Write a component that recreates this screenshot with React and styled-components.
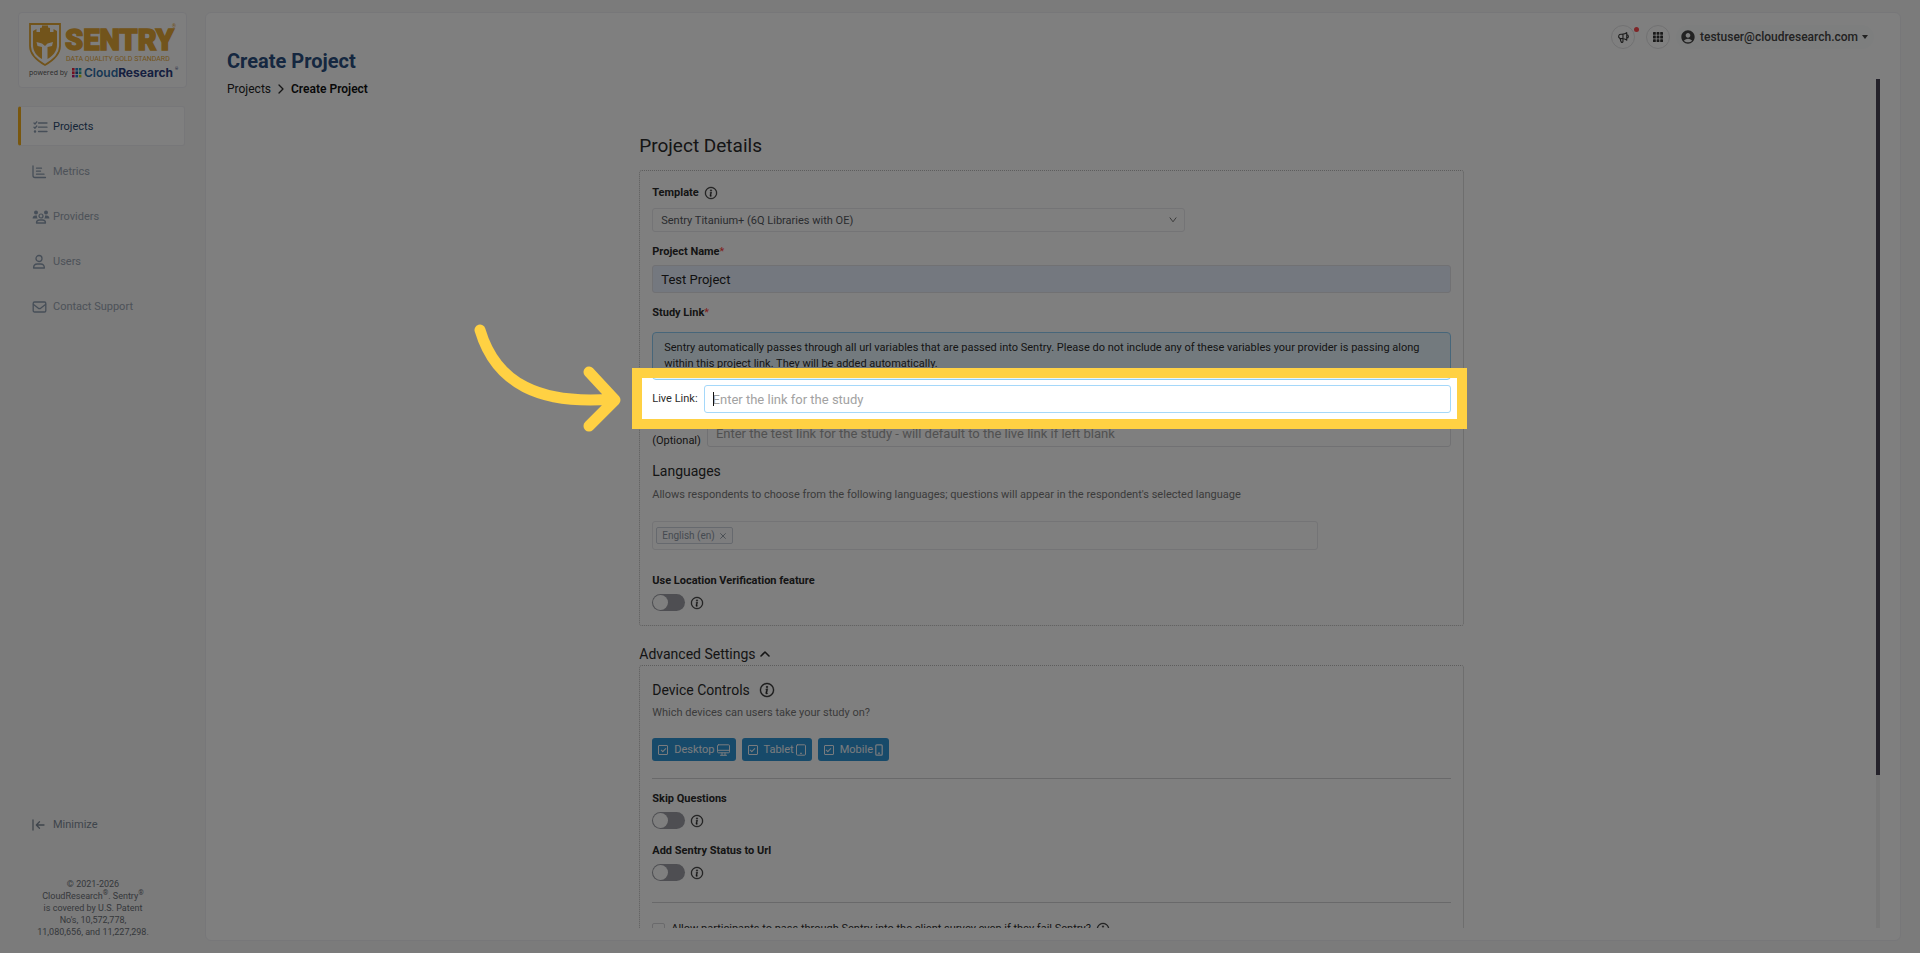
import React, { useLayoutEffect, useRef, useState } from "react";
import styled, { createGlobalStyle, css } from "styled-components";
import { BsInfoCircle } from "react-icons/bs";
import { MdAccountCircle } from "react-icons/md";
import { HiOutlineSpeakerphone } from "react-icons/hi";

const GlobalStyle = createGlobalStyle`
  *, *::before, *::after { box-sizing: border-box; }
  body {
    margin: 0;
    background: #f6f6f6;
    color: #2b2b2b;
    font-family: Roboto, Inter, sans-serif;
    font-size: 11px;
    line-height: 16px;
    overflow: hidden;
  }
  button, input, select { font-family: inherit; color: inherit; }
  button { cursor: pointer; }
  h1, h2, h3, p, ul { margin: 0; padding: 0; }
`;

const Page = styled.div`
  display: flex;
  gap: 18px;
  height: 100vh;
  padding: 12px 19px 12px 18px;
`;

/* ---------- Sidebar ---------- */

const Sidebar = styled.aside`
  flex: 0 0 169px;
  display: flex;
  flex-direction: column;
`;

const LogoBox = styled.a`
  display: block;
  height: 76px;
  border: 1px solid #ececf2;
  border-radius: 4px;
  background: #fdfdfd;
`;

const Nav = styled.nav`
  display: flex;
  flex-direction: column;
  gap: 5px;
  margin-top: 18px;
  padding-right: 2px;
`;

const NavLink = styled.a`
  display: flex;
  align-items: center;
  gap: 3px;
  height: 40px;
  padding: 1px 0 0 11px;
  border: 1px solid transparent;
  border-left: 3px solid transparent;
  border-radius: 3px;
  color: #9aa5b2;
  font-size: 11px;
  text-decoration: none;
  ${(p) =>
    p.$active &&
    css`
      background: #fff;
      border-color: #eeeef2;
      border-left-color: #f2ae1c;
      color: #2c4a70;
    `}
  svg { width: 18px; height: 16px; color: #8d9db0; }
`;

const Minimize = styled.button`
  display: flex;
  align-items: center;
  gap: 7px;
  margin: auto 0 0 14px;
  padding: 0;
  border: 0;
  background: none;
  color: #7e8a98;
  font-size: 11px;
  line-height: 16px;
`;

const Legal = styled.p`
  width: 150px;
  margin: 45px 0 3px;
  color: #6c7178;
  font-size: 9px;
  line-height: 12px;
  text-align: center;
  sup { font-size: 7px; line-height: 0; }
`;

/* ---------- Main card ---------- */

const Card = styled.main`
  flex: 1;
  min-width: 0;
  display: flex;
  flex-direction: column;
  padding-bottom: 12px;
  border: 1px solid #eeeef3;
  border-radius: 6px;
  background: #fff;
`;

const Header = styled.header`
  display: flex;
  justify-content: space-between;
  height: 66px;
  padding: 12px 26px 0 21px;
`;

const Title = styled.h1`
  margin-top: 24px;
  color: #2b4f80;
  font-size: 20px;
  line-height: 24px;
  font-weight: 700;
`;

const Tools = styled.div`
  display: flex;
  align-items: flex-start;
  gap: 11px;
`;

const RoundButton = styled.button`
  position: relative;
  display: grid;
  place-items: center;
  width: 24px;
  height: 24px;
  padding: 0;
  border: 1px solid #e2e2e4;
  border-radius: 50%;
  background: none;
  color: #333;
`;

const Dot = styled.span`
  position: absolute;
  top: 1px;
  right: -5px;
  width: 5px;
  height: 5px;
  border-radius: 50%;
  background: #ff4a4f;
`;

const UserMenu = styled.button`
  display: flex;
  align-items: center;
  gap: 4px;
  height: 24px;
  margin-left: -5px;
  padding: 0 6px 0 4px;
  border: 0;
  border-radius: 12px;
  background: #fbfcfc;
  color: #444;
  font-size: 12px;
  font-weight: 500;
`;

const Body = styled.div`
  flex: 1;
  min-height: 0;
  display: flex;
  padding-right: 20px;
`;

const Scroller = styled.div`
  flex: 1;
  min-width: 0;
  overflow: hidden;
  padding: 2px 0 0 21px;
`;

const Track = styled.div`
  width: 4px;
  background: #f0f0f0;
`;

const Thumb = styled.div`
  height: 82%;
  background: #484454;
`;

const Crumbs = styled.nav`
  display: flex;
  align-items: center;
  gap: 7px;
  height: 16px;
  font-size: 12px;
  a { color: #222; text-decoration: none; }
  strong { color: #111; font-weight: 600; }
`;

/* ---------- Form ---------- */

const Form = styled.form`
  width: 50%;
  min-width: 640px;
  margin: 37px auto 0;
`;

const Heading = styled.h2`
  font-size: 19px;
  line-height: 24px;
  font-weight: 400;
`;

const Panel = styled.section`
  margin-top: ${(p) => p.$gap}px;
  padding: 14px 12px;
  border: 1px dotted #bababa;
  border-radius: 3px;
`;

const Line = styled.div`
  display: flex;
  align-items: center;
  gap: ${(p) => p.$gap || 6}px;
  margin-top: ${(p) => p.$top || 0}px;
`;

const InfoIcon = styled(BsInfoCircle)`
  stroke: currentColor;
  stroke-width: 0.5px;
  overflow: visible;
`;

const Label = styled.label`
  display: block;
  font-size: 11px;
  line-height: 16px;
  font-weight: 700;
  margin-top: ${(p) => p.$top || 0}px;
`;

const Required = styled.span`
  color: #ff4040;
  font-weight: 400;
`;

const SelectWrap = styled.div`
  display: grid;
  align-items: center;
  width: calc(100% * 2 / 3);
  margin-top: 7px;
  select, svg { grid-area: 1 / 1; }
  svg { justify-self: end; margin-right: 8px; color: #777; pointer-events: none; }
`;

const Select = styled.select`
  appearance: none;
  width: 100%;
  height: 24px;
  padding: 0 8px;
  border: 1px solid #e8e8ec;
  border-radius: 3px;
  background: #fff;
  color: #55585e;
  font-size: 11px;
`;

const TextInput = styled.input`
  flex: 1;
  width: 100%;
  min-width: 0;
  height: 28px;
  padding: 0 8px;
  border: 1px solid ${(p) => (p.$focused ? "#a5d8fa" : "#e2e2e6")};
  border-radius: 3px;
  background: ${(p) => (p.$filled ? "#e8f0fe" : "#fff")};
  color: #222;
  font-size: 13px;
  outline: none;
  margin-top: ${(p) => p.$top || 0}px;
  &::placeholder { color: #a2a2a2; opacity: 1; }
`;

const Notice = styled.div`
  margin-top: 11px;
  padding: 7px 11px;
  border: 1px solid #8fcdf5;
  border-radius: 4px;
  background: #e6f5fd;
`;

const LinkRow = styled.div`
  display: flex;
  align-items: center;
  gap: 6px;
  margin-top: ${(p) => p.$top}px;
`;

const FieldWrap = styled.div`
  position: relative;
  flex: 1;
  display: flex;
`;

const TextCaret = styled.span`
  position: absolute;
  top: 7px;
  left: 9px;
  width: 1px;
  height: 14px;
  background: #111;
`;

const Subheading = styled.h3`
  font-size: 14px;
  line-height: 20px;
  font-weight: 400;
`;

const Hint = styled.p`
  margin-top: ${(p) => p.$top}px;
  color: #777;
`;

const TagBox = styled.div`
  display: flex;
  align-items: center;
  width: calc(100% * 5 / 6);
  height: 29px;
  margin-top: 18px;
  padding: 0 3px;
  border: 1px solid #e8e8ec;
  border-radius: 3px;
  input { flex: 1; min-width: 0; border: 0; background: none; outline: none; }
`;

const Tag = styled.span`
  display: flex;
  align-items: center;
  gap: 5px;
  height: 17px;
  padding: 0 6px 0 5px;
  border: 1px solid #cdd3dc;
  border-radius: 2px;
  background: #fbfbfd;
  color: #8b95a2;
  font-size: 10px;
  button { display: grid; padding: 0; border: 0; background: none; }
`;

const Switch = styled.input`
  appearance: none;
  display: flex;
  width: 33px;
  height: 17px;
  margin: 0;
  padding: 1px;
  border-radius: 9px;
  background: #9c9da4;
  &::before {
    content: "";
    width: 15px;
    height: 15px;
    border-radius: 50%;
    background: #fff;
  }
`;

const DisclosureButton = styled.button`
  display: flex;
  align-items: center;
  gap: 4px;
  margin-top: 18px;
  padding: 0;
  border: 0;
  background: none;
  font-size: 14px;
  line-height: 20px;
`;

const Device = styled.label`
  display: flex;
  align-items: center;
  height: 23px;
  padding: 0 6px;
  border-radius: 3px;
  background: #2f94d4;
  color: #f2f7fc;
  font-size: 11px;
  span { margin: 0 2px 0 6px; }
`;

const Tick = styled.input`
  appearance: none;
  display: grid;
  place-items: center;
  width: 10px;
  height: 10px;
  margin: 0;
  border: 1px solid #f2f7fc;
  border-radius: 1px;
  &::before {
    content: "";
    width: 3px;
    height: 5px;
    border: solid #f2f7fc;
    border-width: 0 1px 1px 0;
    transform: rotate(45deg);
  }
`;

const Divider = styled.hr`
  margin: ${(p) => p.$top}px 0 0;
  border: 0;
  border-top: 1px solid #d2d2d4;
`;

const Box = styled.input`
  appearance: none;
  width: 13px;
  height: 13px;
  margin: 0;
  border: 1px solid #d4d4d8;
  border-radius: 2px;
`;

/* ---------- Walkthrough overlay ---------- */

const Spotlight = styled.div`
  position: fixed;
  border: 10px solid #ffd143;
  pointer-events: none;
  box-shadow: 0 0 0 4000px rgba(0, 0, 0, 0.5);
`;

const Arrow = styled.svg`
  position: absolute;
  right: 100%;
  top: 50%;
  width: 158px;
  height: 110px;
  margin: -76px 20px 0 0;
`;

/* ---------- Drawings ---------- */

const stroke = {
  fill: "none",
  stroke: "currentColor",
  strokeLinecap: "round",
  strokeLinejoin: "round",
};

const ListIcon = () => (
  <svg viewBox="0 0 18 16" {...stroke} strokeWidth="1.3">
    <path d="M6.5 4H15M6.5 8.2H15M6.5 12.5H15M2 4l1 1 1.8-2.2M2 8.2l1 1 1.8-2.2" />
    <circle cx="3" cy="12.5" r=".6" fill="currentColor" />
  </svg>
);

const ChartIcon = () => (
  <svg viewBox="0 0 18 16" {...stroke} strokeWidth="1.3">
    <path d="M1 2v9.5q0 2 2 2h10.500M4.500 4.200h5M4.500 7.200h4M4.500 10.200h7.500" />
  </svg>
);

const PeopleIcon = () => (
  <svg viewBox="0 0 18 16" fill="currentColor">
    <circle cx="4" cy="3.600" r="2" />
    <circle cx="14" cy="3.600" r="2" />
    <path d="M.6 9.500c0-2 1.200-3 2.800-3h1.600c-.2 1.400.1 2.200.8 3zM17.400 9.500c0-2-1.200-3-2.800-3h-1.600c.2 1.400-.1 2.200-.8 3z" />
    <circle cx="9" cy="7" r="2" fill="none" stroke="currentColor" strokeWidth="1.200" />
    <path d="M4.500 14c0-2 1.500-3 3-3h3c1.500 0 3 1 3 3z" fill="none" stroke="currentColor" strokeWidth="1.300" strokeLinejoin="round" />
  </svg>
);

const PersonIcon = () => (
  <svg viewBox="0 0 18 16" {...stroke} strokeWidth="1.300">
    <circle cx="7" cy="4.500" r="3" />
    <path d="M1.600 14c0-2.600 1.500-4 3.700-4h3.400c2.200 0 3.700 1.400 3.700 4z" />
  </svg>
);

const MailIcon = () => (
  <svg viewBox="0 0 18 16" {...stroke} strokeWidth="1.300">
    <rect x="1.200" y="3" width="12.600" height="10" rx="1.300" />
    <path d="M1.500 5.500l4.600 3.600q1.400 1 2.800 0l4.600-3.600" />
  </svg>
);

const MinimizeIcon = () => (
  <svg width="14" height="12" viewBox="0 0 14 12" {...stroke} strokeWidth="1.300">
    <path d="M1 1v10M12 6H4.500M7.500 2.800L4.300 6l3.200 3.200" />
  </svg>
);

const GridIcon = () => (
  <svg width="10" height="10" viewBox="0 0 10 10" fill="currentColor">
    {[0, 3.6, 7.2].map((y) =>
      [0, 3.6, 7.2].map((x) => (
        <rect key={`${x}-${y}`} x={x} y={y} width="2.800" height="2.800" rx=".5" />
      ))
    )}
  </svg>
);

const CaretIcon = () => (
  <svg width="6" height="4" viewBox="0 0 6 4" fill="currentColor">
    <path d="M0 0h6L3 4z" />
  </svg>
);

const ChevronRight = () => (
  <svg width="6" height="10" viewBox="0 0 6 10" {...stroke} strokeWidth="1.300">
    <path d="M1 1l4 4-4 4" />
  </svg>
);

const ChevronDown = () => (
  <svg width="8" height="6" viewBox="0 0 8 6" {...stroke} strokeWidth="1">
    <path d="M1 .8l3 4 3-4" />
  </svg>
);

const ChevronUp = () => (
  <svg width="10" height="8" viewBox="0 0 10 8" {...stroke} strokeWidth="1.600">
    <path d="M1 6l4-4 4 4" />
  </svg>
);

const CloseIcon = () => (
  <svg width="6" height="6" viewBox="0 0 6 6" {...stroke} strokeWidth=".9">
    <path d="M.6.6l4.800 4.800M5.400.6L.6 5.400" />
  </svg>
);

const DesktopIcon = () => (
  <svg width="13" height="12" viewBox="0 0 13 12" {...stroke} strokeWidth="1">
    <rect x=".5" y=".8" width="12" height="8" rx="1" />
    <path d="M.5 6.300h12M5 9v2M8 9v2M3.500 11.300h6" />
  </svg>
);

const TabletIcon = () => (
  <svg width="10" height="12" viewBox="0 0 10 12" {...stroke} strokeWidth="1">
    <rect x=".5" y=".8" width="9" height="10.400" rx="1" />
    <path d="M4.400 9.300h1.200" />
  </svg>
);

const MobileIcon = () => (
  <svg width="8" height="12" viewBox="0 0 8 12" {...stroke} strokeWidth="1.200">
    <rect x=".8" y=".8" width="6.400" height="10.400" rx="1" />
    <path d="M3.500 9.200h1" />
  </svg>
);

const LogoDots = ["#e8203c", "#2b7fd0", "#1d9fb0", "#e8203c", "#2350a0", "#28a8a0", "#c01870", "#2b7fd0", "#c8d820"];

const Logo = () => (
  <svg width="167" height="74" viewBox="0 0 167 74" role="img" aria-label="Sentry">
    <path d="M11 11h30v22c0 9-8 15-15 19-7-4-15-10-15-19z" fill="none" stroke="#e5a836" strokeWidth="1.800" />
    <path
      d="M14 18l3.500-2v3h3.500v-4l2-.5v-2h6v2l2 .5v4h3.500v-3l3.500 2v14c0 7-5 11.500-9.500 14V34l4.500-1 1-4-5.500 1.500L26 33l-3-2.500L17.500 29l1 4 4.500 1v12C18.500 43.500 14 39 14 32z"
      fill="#e5a836"
    />
    <text x="46" y="37" fontFamily="Roboto, sans-serif" fontWeight="900" fontSize="29" fill="#e5a836" stroke="#e5a836" strokeWidth="1.500">
      SENTRY
    </text>
    <text x="153" y="15" fontSize="5" fill="#e5a836">®</text>
    <text x="47" y="48" fontFamily="Roboto, sans-serif" fontSize="7" fill="#e5a836">
      DATA QUALITY GOLD STANDARD
    </text>
    <text x="10" y="62" fontFamily="Open Sans, sans-serif" fontSize="7" fill="#555">powered by</text>
    {LogoDots.map((c, i) => (
      <rect key={i} x={53 + (i % 3) * 3.4} y={55 + Math.floor(i / 3) * 3.4} width="2.600" height="2.600" fill={c} />
    ))}
    <text x="65" y="64" fontFamily="Inter, sans-serif" fontSize="12" fontWeight="600" fill="#2f6fa8">
      Cloud<tspan fill="#2b3f80" fontWeight="700">Research</tspan>
    </text>
    <text x="156" y="57" fontSize="4" fill="#2b3f80">®</text>
  </svg>
);

/* ---------- Page ---------- */

const navItems = [
  { label: "Projects", icon: <ListIcon />, active: true },
  { label: "Metrics", icon: <ChartIcon /> },
  { label: "Providers", icon: <PeopleIcon /> },
  { label: "Users", icon: <PersonIcon /> },
  { label: "Contact Support", icon: <MailIcon /> },
];

const devices = [
  { label: "Desktop", icon: <DesktopIcon /> },
  { label: "Tablet", icon: <TabletIcon /> },
  { label: "Mobile", icon: <MobileIcon /> },
];

function SwitchField({ id, label, top }) {
  return (
    <>
      <Label htmlFor={id} $top={top}>{label}</Label>
      <Line $top={5}>
        <Switch type="checkbox" role="switch" id={id} />
        <InfoIcon size={12} />
      </Line>
    </>
  );
}

function Walkthrough({ target }) {
  const [rect, setRect] = useState(null);
  useLayoutEffect(() => {
    const measure = () => setRect(target.current.getBoundingClientRect());
    measure();
    window.addEventListener("resize", measure);
    return () => window.removeEventListener("resize", measure);
  }, [target]);
  if (!rect) return null;
  return (
    <Spotlight
      style={{ left: rect.left - 20, top: rect.top - 17, width: rect.width + 36, height: rect.height + 33 }}
    >
      <Arrow viewBox="0 0 158 110" {...stroke} stroke="#ffd143" strokeWidth="11">
        <path d="M16 7C32 61 76 82 149 76M125 49l26 28-26 26" />
      </Arrow>
    </Spotlight>
  );
}

export default function App() {
  const liveRow = useRef(null);
  return (
    <>
      <GlobalStyle />
      <Page>
        <Sidebar>
          <LogoBox href="#"><Logo /></LogoBox>
          <Nav>
            {navItems.map((n) => (
              <NavLink key={n.label} href="#" $active={n.active}>
                {n.icon}
                {n.label}
              </NavLink>
            ))}
          </Nav>
          <Minimize type="button"><MinimizeIcon />Minimize</Minimize>
          <Legal>
            © 2021-2026<br />
            CloudResearch<sup>®</sup>. Sentry<sup>®</sup><br />
            is covered by U.S. Patent<br />
            No's, 10,572,778,<br />
            11,080,656, and 11,227,298.
          </Legal>
        </Sidebar>

        <Card>
          <Header>
            <Title>Create Project</Title>
            <Tools>
              <RoundButton type="button" aria-label="Announcements">
                <HiOutlineSpeakerphone size={13} />
                <Dot />
              </RoundButton>
              <RoundButton type="button" aria-label="Apps"><GridIcon /></RoundButton>
              <UserMenu type="button">
                <MdAccountCircle size={16} />
                testuser@cloudresearch.com
                <CaretIcon />
              </UserMenu>
            </Tools>
          </Header>

          <Body>
            <Scroller>
              <Crumbs>
                <a href="#">Projects</a>
                <ChevronRight />
                <strong>Create Project</strong>
              </Crumbs>

              <Form>
                <Heading>Project Details</Heading>
                <Panel $gap={12}>
                  <Line>
                    <Label htmlFor="template">Template</Label>
                    <InfoIcon size={12} />
                  </Line>
                  <SelectWrap>
                    <Select id="template">
                      <option>Sentry Titanium+ (6Q Libraries with OE)</option>
                    </Select>
                    <ChevronDown />
                  </SelectWrap>

                  <Label htmlFor="name" $top={12}>Project Name<Required>*</Required></Label>
                  <TextInput id="name" type="text" defaultValue="Test Project" $filled $top={5} />

                  <Label as="div" $top={12}>Study Link<Required>*</Required></Label>
                  <Notice>
                    Sentry automatically passes through all url variables that are passed into Sentry. Please do not
                    include any of these variables your provider is passing along within this project link. They will be
                    added automatically.
                  </Notice>
                  <LinkRow ref={liveRow} $top={5}>
                    <label htmlFor="live">Live Link:</label>
                    <FieldWrap>
                      <TextInput id="live" type="text" placeholder="Enter the link for the study" $focused />
                      <TextCaret />
                    </FieldWrap>
                  </LinkRow>
                  <LinkRow $top={4}>
                    <label htmlFor="test">Test Link:<br />(Optional)</label>
                    <TextInput
                      id="test"
                      type="text"
                      placeholder="Enter the test link for the study - will default to the live link if left blank"
                    />
                  </LinkRow>

                  <Line $top={12}><Subheading>Languages</Subheading></Line>
                  <Hint $top={6}>
                    Allows respondents to choose from the following languages; questions will appear in the respondent's
                    selected language
                  </Hint>
                  <TagBox>
                    <Tag>
                      English (en)
                      <button type="button" aria-label="Remove English"><CloseIcon /></button>
                    </Tag>
                    <input type="text" aria-label="Languages" />
                  </TagBox>

                  <SwitchField id="location" label="Use Location Verification feature" top={23} />
                </Panel>

                <DisclosureButton type="button" aria-expanded="true">
                  Advanced Settings
                  <ChevronUp />
                </DisclosureButton>
                <Panel $gap={1}>
                  <Line $gap={10}>
                    <Subheading>Device Controls</Subheading>
                    <InfoIcon size={14} />
                  </Line>
                  <Hint $top={5}>Which devices can users take your study on?</Hint>
                  <Line $top={17}>
                    {devices.map((d) => (
                      <Device key={d.label}>
                        <Tick type="checkbox" defaultChecked />
                        <span>{d.label}</span>
                        {d.icon}
                      </Device>
                    ))}
                  </Line>
                  <Divider $top={17} />
                  <SwitchField id="skip" label="Skip Questions" top={12} />
                  <SwitchField id="status" label="Add Sentry Status to Url" top={14} />
                  <Divider $top={21} />
                  <Line $top={18}>
                    <Box type="checkbox" id="allow" />
                    <label htmlFor="allow">
                      Allow participants to pass through Sentry into the client survey even if they fail Sentry?
                    </label>
                    <InfoIcon size={12} />
                  </Line>
                </Panel>
              </Form>
            </Scroller>
            <Track><Thumb /></Track>
          </Body>
        </Card>
      </Page>
      <Walkthrough target={liveRow} />
    </>
  );
}
